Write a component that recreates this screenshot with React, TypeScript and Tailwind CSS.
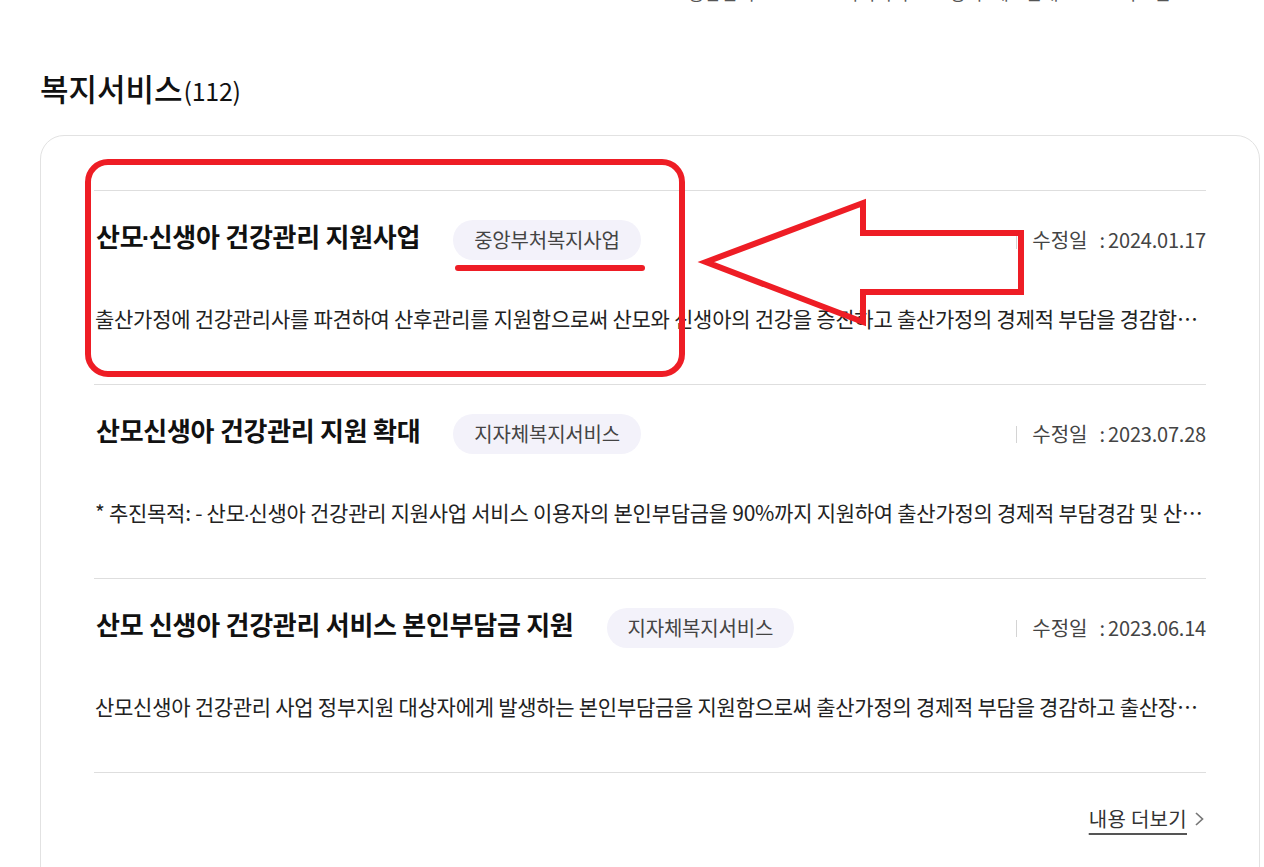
import React from 'react';

type Service = {
  title: string;
  tag: string;
  date: string;
  desc: string;
};

const services: Service[] = [
  {
    title: '산모·신생아 건강관리 지원사업',
    tag: '중앙부처복지사업',
    date: '2024.01.17',
    desc: '출산가정에 건강관리사를 파견하여 산후관리를 지원함으로써 산모와 신생아의 건강을 증진하고 출산가정의 경제적 부담을 경감합니다.',
  },
  {
    title: '산모신생아 건강관리 지원 확대',
    tag: '지자체복지서비스',
    date: '2023.07.28',
    desc: '* 추진목적: - 산모·신생아 건강관리 지원사업 서비스 이용자의 본인부담금을 90%까지 지원하여 출산가정의 경제적 부담경감 및 산모와 신생아의 건강 증진',
  },
  {
    title: '산모 신생아 건강관리 서비스 본인부담금 지원',
    tag: '지자체복지서비스',
    date: '2023.06.14',
    desc: '산모신생아 건강관리 사업 정부지원 대상자에게 발생하는 본인부담금을 지원함으로써 출산가정의 경제적 부담을 경감하고 출산장려 분위기를 조성',
  },
];

const font = { fontFamily: '"Noto Sans CJK KR", "Noto Sans", sans-serif' };
const latin = { fontFamily: '"Liberation Sans", sans-serif' };

// the CJK font draws "·" full width, the original uses a narrow one
function withDots(text: string) {
  const parts = text.split('·');
  return parts.map((p, i) => (
    <React.Fragment key={i}>
      {p}
      {i < parts.length - 1 && (
        <span style={latin} className="-mx-[1.5px]">
          ·
        </span>
      )}
    </React.Fragment>
  ));
}

function ServiceRow({ item }: { item: Service }) {
  return (
    <div className="border-t border-[#dedede] h-[194px] pt-[29px]">
      <div className="flex items-start h-[40px]">
        <h3 className="text-[26px] leading-[32px] font-bold text-[#111] tracking-[-0.27px] pl-[2px]">{withDots(item.title)}</h3>
        <span className="ml-[33px] h-[40px] px-[21px] rounded-full bg-[#f3f2fa] text-[20px] leading-[40px] text-[#444] tracking-[-0.2px]">
          {item.tag}
        </span>
        <div className="ml-auto flex items-center h-[40px] text-[20px] text-[#444]">
          <span className="w-px h-[17px] bg-[#d4d4d4] mr-[15px]" />
          <span>수정일</span>
          <span className="ml-[12px] mr-[3px]">:</span>
          <span className="tracking-[-0.2px]">{item.date}</span>
        </div>
      </div>
      <p className="mt-[43px] text-[21px] leading-[30px] text-[#222] truncate pl-[1px] tracking-[-0.27px]">{withDots(item.desc)}</p>
    </div>
  );
}

export default function App() {
  return (
    <div className="relative w-[1264px] h-[867px] overflow-hidden bg-white" style={font}>
      {/* top menu, scrolled mostly out of view */}
      <div className="h-[6px] overflow-hidden">
        <div className="-mt-[22px] flex text-[18px] leading-[28px] text-[#555] pl-[688px]">
          <span>통합검색</span>
          <span className="ml-[88px]">복지서비스</span>
          <span className="ml-[24px]">정책·제도안내</span>
          <span className="ml-[62px]">자료실</span>
        </div>
      </div>

      <h2 className="ml-[40px] mt-[62px] flex items-baseline text-[#111] h-[40px]">
        <span className="text-[31px] leading-[40px] font-medium">복지서비스</span>
        <span className="ml-[1px] text-[25px] leading-[40px] tracking-[-0.3px]">(112)</span>
      </h2>

      <div className="ml-[40px] mt-[27px] w-[1220px] border border-[#e2e2e2] rounded-[24px] px-[53px] pt-[54px] pb-[60px]">
        {services.map((s) => (
          <ServiceRow key={s.date} item={s} />
        ))}
        <div className="border-t border-[#dedede] pt-[32px] flex justify-end">
          <a className="flex items-center text-[20px] leading-[28px] text-[#333] cursor-pointer">
            <span className="underline underline-offset-[6px] decoration-[#555] tracking-[0.3px]">내용 더보기</span>
            <svg width="14" height="18" viewBox="0 0 14 18" className="ml-[5px]" fill="none">
              <path d="M4 3 L10.5 9 L4 15" stroke="#777" strokeWidth="1.7" />
            </svg>
          </a>
        </div>
      </div>

      {/* red annotation overlay */}
      <svg className="absolute left-0 top-0 pointer-events-none" width="1264" height="867" viewBox="0 0 1264 867" fill="none">
        <rect x="88" y="162" width="594" height="212" rx="20" stroke="#ee1d25" strokeWidth="6" />
        <line x1="458" y1="268" x2="642" y2="268" stroke="#ee1d25" strokeWidth="6" strokeLinecap="round" />
        <polygon
          points="706,262 863,203 863,233 1021,233 1021,292 863,292 863,322"
          stroke="#ee1d25"
          strokeWidth="6"
          strokeLinejoin="miter"
        />
      </svg>
    </div>
  );
}
